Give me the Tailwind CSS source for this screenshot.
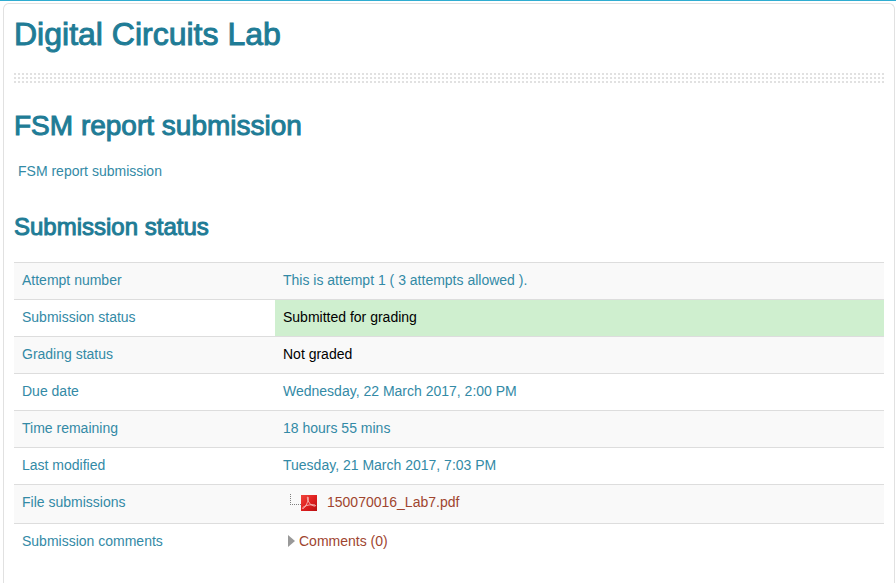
<!DOCTYPE html>
<html lang="en">
<head>
<meta charset="utf-8">
<meta name="viewport" content="width=device-width, initial-scale=1">
<title>Digital Circuits Lab: FSM report submission</title>
<script src="https://cdn.jsdelivr.net/npm/@tailwindcss/browser@4"></script>
</head>
<body class="min-h-screen flex flex-col overflow-x-hidden bg-white border-t border-[#30add1] font-['Liberation_Sans',Arial,sans-serif] text-sm text-[#338aa6]">
<main class="grow mt-[2px] ml-[3px] mr-px px-[10px] pb-6 border border-b-0 border-[#e1e1e1] rounded-t-md">
  <header>
    <h1 class="pt-[10px] text-[32px] leading-10 text-[#1f7c96] [-webkit-text-stroke:1px_#1f7c96]">Digital Circuits Lab</h1>
    <div class="mt-[19px] h-[10px] bg-[repeating-linear-gradient(to_bottom,transparent_0_2px,white_2px_4px),repeating-linear-gradient(to_right,#e1e1e1_0_2px,transparent_2px_4px)]"></div>
  </header>
  <h2 class="mt-[23px] text-[28px] leading-10 text-[#1f7c96] [-webkit-text-stroke:1px_#1f7c96]">FSM report submission</h2>
  <p class="mt-[15px] px-1 leading-5">FSM report submission</p>
  <section>
    <h3 class="mt-[26px] text-2xl leading-10 text-[#1f7c96] [-webkit-text-stroke:1px_#1f7c96]">Submission status</h3>
    <table class="mt-[15px] w-full border-separate border-spacing-0 text-left leading-5 [&_th]:font-normal [&_th]:w-[30%] [&_th]:px-2 [&_td]:px-2 [&_th]:pt-[7px] [&_td]:pt-[7px] [&_th]:pb-[9px] [&_td]:pb-[9px] [&_th]:border-t [&_td]:border-t [&_th]:border-[#dddddd] [&_td]:border-[#dddddd] [&_tr:nth-child(odd)]:bg-[#f9f9f9]">
      <tbody>
        <tr><th scope="row">Attempt number</th><td>This is attempt 1 ( 3 attempts allowed ).</td></tr>
        <tr><th scope="row">Submission status</th><td class="bg-[#cfefcf] text-black">Submitted for grading</td></tr>
        <tr><th scope="row">Grading status</th><td class="text-black">Not graded</td></tr>
        <tr><th scope="row">Due date</th><td>Wednesday, 22 March 2017, 2:00 PM</td></tr>
        <tr><th scope="row">Time remaining</th><td>18 hours 55 mins</td></tr>
        <tr><th scope="row">Last modified</th><td>Tuesday, 21 March 2017, 7:03 PM</td></tr>
        <tr><th scope="row" class="align-top">File submissions</th><td>
          <div class="flex h-[22px] items-start pl-[7px]">
            <svg class="mt-[2px] shrink-0" width="27" height="18" viewBox="0 0 27 18" aria-hidden="true">
              <defs><linearGradient id="pdf" x1="0" y1="0" x2="1" y2="1"><stop offset="0" stop-color="#f0463c"/><stop offset=".5" stop-color="#e02020"/><stop offset="1" stop-color="#b80f12"/></linearGradient></defs>
              <path d="M.5 0V11M0 10.5H11" fill="none" stroke="#808080" stroke-dasharray="1 1"/>
              <rect x="11" y="1" width="16" height="16" fill="url(#pdf)"/>
              <path d="M17.700 3c1.200 0 .6 3-.4 5.500C16 12 13.700 15 12.600 14.500c-.8-.8 2.500-3 7-3.600 3-.4 5.900-.2 6 .7.100 1-3.100.3-5-1.300C18.200 8.300 16.600 3 17.700 3Z" fill="none" stroke="#fbd5d0" stroke-width=".8"/>
            </svg>
            <a href="#" class="ml-[10px] text-[#a0452f]">150070016_Lab7.pdf</a>
          </div>
        </td></tr>
        <tr class="!bg-white"><th scope="row">Submission comments</th><td>
          <a href="#" class="flex items-center pl-[5px] text-[#a0452f]">
            <svg class="mr-1 shrink-0" width="7" height="12" viewBox="0 0 7 12" aria-hidden="true"><path d="M0 0 7 6 0 12Z" fill="#999"/></svg>Comments (0)
          </a>
        </td></tr>
      </tbody>
    </table>
  </section>
</main>
</body>
</html>
